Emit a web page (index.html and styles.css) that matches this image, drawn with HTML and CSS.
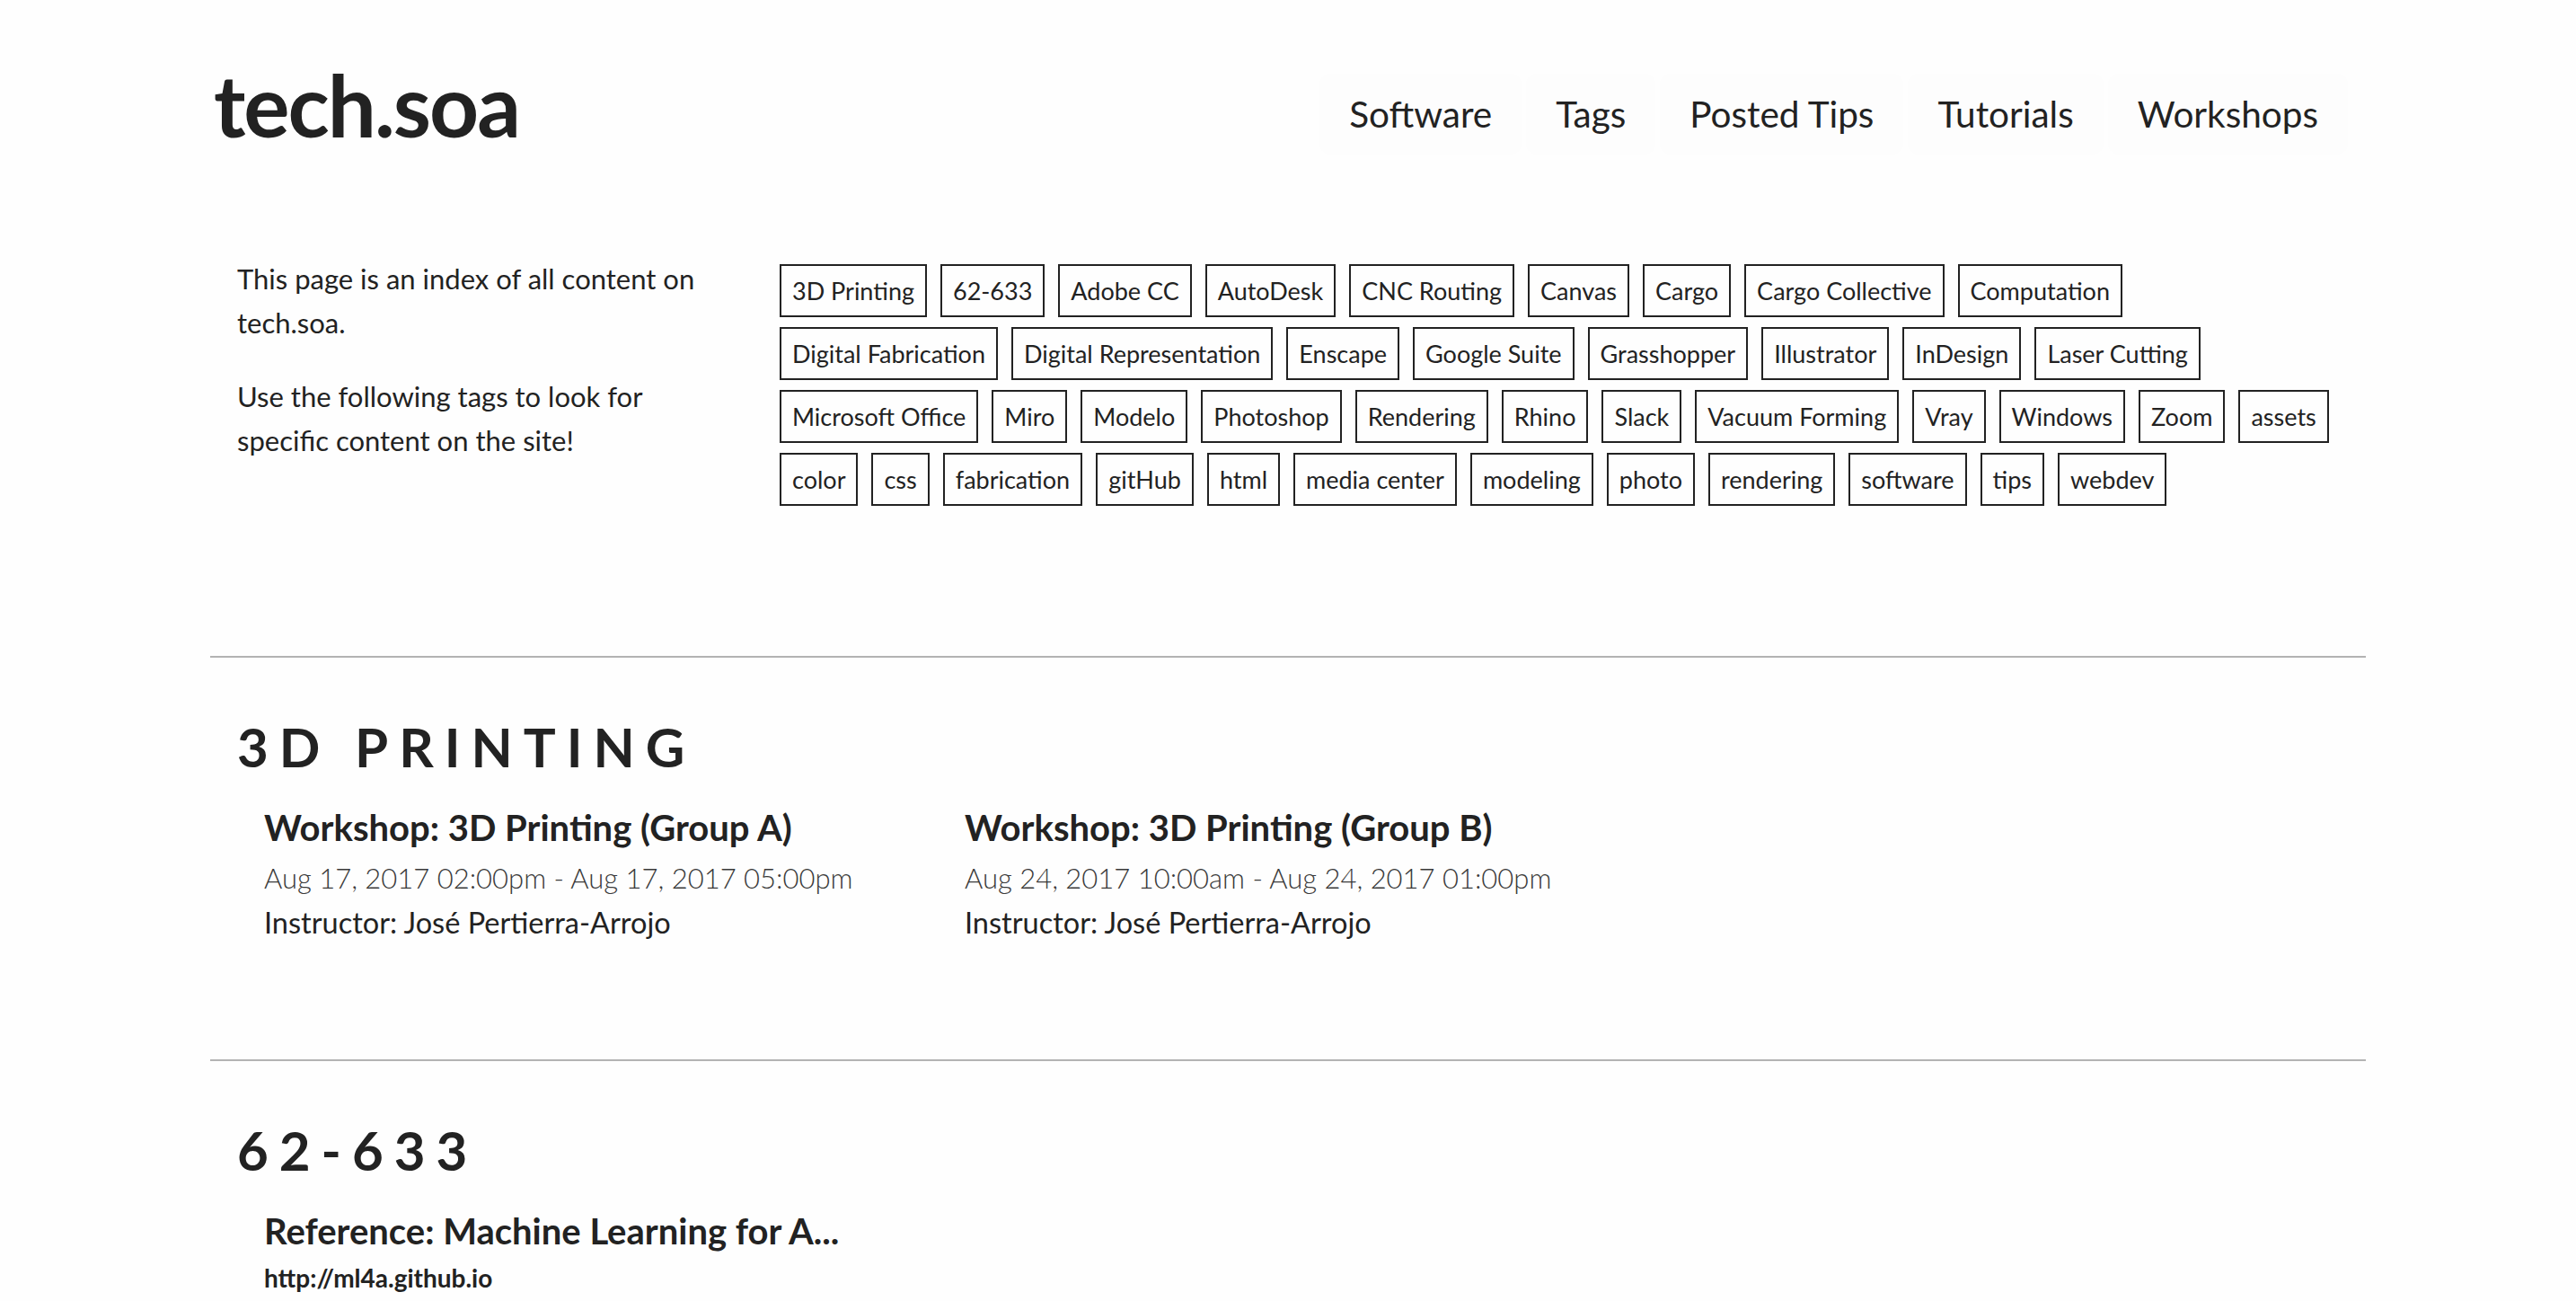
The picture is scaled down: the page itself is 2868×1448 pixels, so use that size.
FILE: index.html
```html
<!DOCTYPE html>
<html lang="en">
<head>
<meta charset="utf-8">
<title>tech.soa</title>
<link rel="stylesheet" href="styles.css">
</head>
<body>
<div class="container">
  <header class="site-header">
    <a class="logo" href="#">tech.soa</a>
    <nav class="nav">
      <a class="nav-item" href="#">Software</a>
      <a class="nav-item" href="#">Tags</a>
      <a class="nav-item" href="#">Posted Tips</a>
      <a class="nav-item" href="#">Tutorials</a>
      <a class="nav-item" href="#">Workshops</a>
    </nav>
  </header>

  <div class="intro-row">
    <div class="intro">
      <p>This page is an index of all content on tech.soa.</p>
      <p>Use the following tags to look for specific content on the site!</p>
    </div>
    <div class="tags">
      <a class="tag" href="#">3D Printing</a>
      <a class="tag" href="#">62-633</a>
      <a class="tag" href="#">Adobe CC</a>
      <a class="tag" href="#">AutoDesk</a>
      <a class="tag" href="#">CNC Routing</a>
      <a class="tag" href="#">Canvas</a>
      <a class="tag" href="#">Cargo</a>
      <a class="tag" href="#">Cargo Collective</a>
      <a class="tag" href="#">Computation</a>
      <a class="tag" href="#">Digital Fabrication</a>
      <a class="tag" href="#">Digital Representation</a>
      <a class="tag" href="#">Enscape</a>
      <a class="tag" href="#">Google Suite</a>
      <a class="tag" href="#">Grasshopper</a>
      <a class="tag" href="#">Illustrator</a>
      <a class="tag" href="#">InDesign</a>
      <a class="tag" href="#">Laser Cutting</a>
      <a class="tag" href="#">Microsoft Office</a>
      <a class="tag" href="#">Miro</a>
      <a class="tag" href="#">Modelo</a>
      <a class="tag" href="#">Photoshop</a>
      <a class="tag" href="#">Rendering</a>
      <a class="tag" href="#">Rhino</a>
      <a class="tag" href="#">Slack</a>
      <a class="tag" href="#">Vacuum Forming</a>
      <a class="tag" href="#">Vray</a>
      <a class="tag" href="#">Windows</a>
      <a class="tag" href="#">Zoom</a>
      <a class="tag" href="#">assets</a>
      <a class="tag" href="#">color</a>
      <a class="tag" href="#">css</a>
      <a class="tag" href="#">fabrication</a>
      <a class="tag" href="#">gitHub</a>
      <a class="tag" href="#">html</a>
      <a class="tag" href="#">media center</a>
      <a class="tag" href="#">modeling</a>
      <a class="tag" href="#">photo</a>
      <a class="tag" href="#">rendering</a>
      <a class="tag" href="#">software</a>
      <a class="tag" href="#">tips</a>
      <a class="tag" href="#">webdev</a>
    </div>
  </div>

  <section class="tag-section first">
    <hr class="rule">
    <h2 class="section-title">3D Printing</h2>
    <div class="cards">
      <div class="card">
        <a class="card-title" href="#">Workshop: 3D Printing (Group A)</a>
        <div class="card-date">Aug 17, 2017 02:00pm - Aug 17, 2017 05:00pm</div>
        <div class="card-meta">Instructor: José Pertierra-Arrojo</div>
      </div>
      <div class="card">
        <a class="card-title" href="#">Workshop: 3D Printing (Group B)</a>
        <div class="card-date">Aug 24, 2017 10:00am - Aug 24, 2017 01:00pm</div>
        <div class="card-meta">Instructor: José Pertierra-Arrojo</div>
      </div>
    </div>
  </section>

  <section class="tag-section">
    <hr class="rule">
    <h2 class="section-title">62-633</h2>
    <div class="cards">
      <div class="card">
        <a class="card-title" href="#">Reference: Machine Learning for A...</a>
        <div class="card-url">http://ml4a.github.io</div>
      </div>
    </div>
  </section>
</div>
</body>
</html>
```

FILE: styles.css
```css
html, body {
  margin: 0;
  padding: 0;
}

body {
  background: #fefefe;
  color: #222222;
  font-family: Lato, "Open Sans", "Liberation Sans", sans-serif;
}

a {
  color: inherit;
  text-decoration: none;
}

.container {
  width: 2400px;
  margin: 0 auto;
}

/* header */
.site-header {
  display: flex;
  justify-content: space-between;
  align-items: flex-start;
}

.logo {
  display: block;
  margin-top: 68px;
  padding-left: 4px;
  font-size: 96px;
  line-height: 96px;
  font-weight: 700;
  letter-spacing: -2px;
}

.nav {
  display: flex;
  gap: 5px;
  margin-top: 82px;
  margin-right: 20px;
}

.nav-item {
  display: block;
  padding: 15px 33px;
  font-size: 40.5px;
  line-height: 60px;
  background: #fdfdfd;
  border-radius: 12px;
}

/* intro + tags */
.intro-row {
  display: grid;
  grid-template-columns: 600px 1800px;
  margin-top: 114px;
}

.intro {
  padding: 0 30px;
}

.intro p {
  margin: 0 0 33px;
  font-size: 31px;
  line-height: 49px;
}

.tags {
  display: flex;
  flex-wrap: wrap;
  gap: 11px 15px;
  padding: 8px 30px 0 34px;
  align-content: flex-start;
}

.tag {
  display: block;
  border: 2px solid #222222;
  padding: 5px 12px;
  font-size: 27px;
  line-height: 45px;
}

/* sections */
.tag-section {
  padding-bottom: 127px;
}

.tag-section.first {
  margin-top: 167px;
}

.rule {
  border: 0;
  height: 2px;
  margin: 0;
  background: #b3b3b3;
}

.section-title {
  margin: 63px 0 0;
  padding-left: 30px;
  font-size: 60px;
  line-height: 72px;
  font-weight: 700;
  letter-spacing: 12px;
  text-transform: uppercase;
}

.cards {
  display: grid;
  grid-template-columns: repeat(3, 780px);
  margin: 27px 30px 0;
}

.card {
  padding: 0 30px;
}

.card-title {
  display: block;
  margin-bottom: 4px;
  font-size: 40px;
  line-height: 54px;
  font-weight: 700;
}

.card-date {
  font-size: 31px;
  line-height: 50px;
  font-weight: 300;
  color: #3a3a3a;
}

.card-meta {
  font-size: 32.5px;
  line-height: 50px;
}

.card-url {
  font-size: 28px;
  line-height: 42px;
  font-weight: 700;
}
```
